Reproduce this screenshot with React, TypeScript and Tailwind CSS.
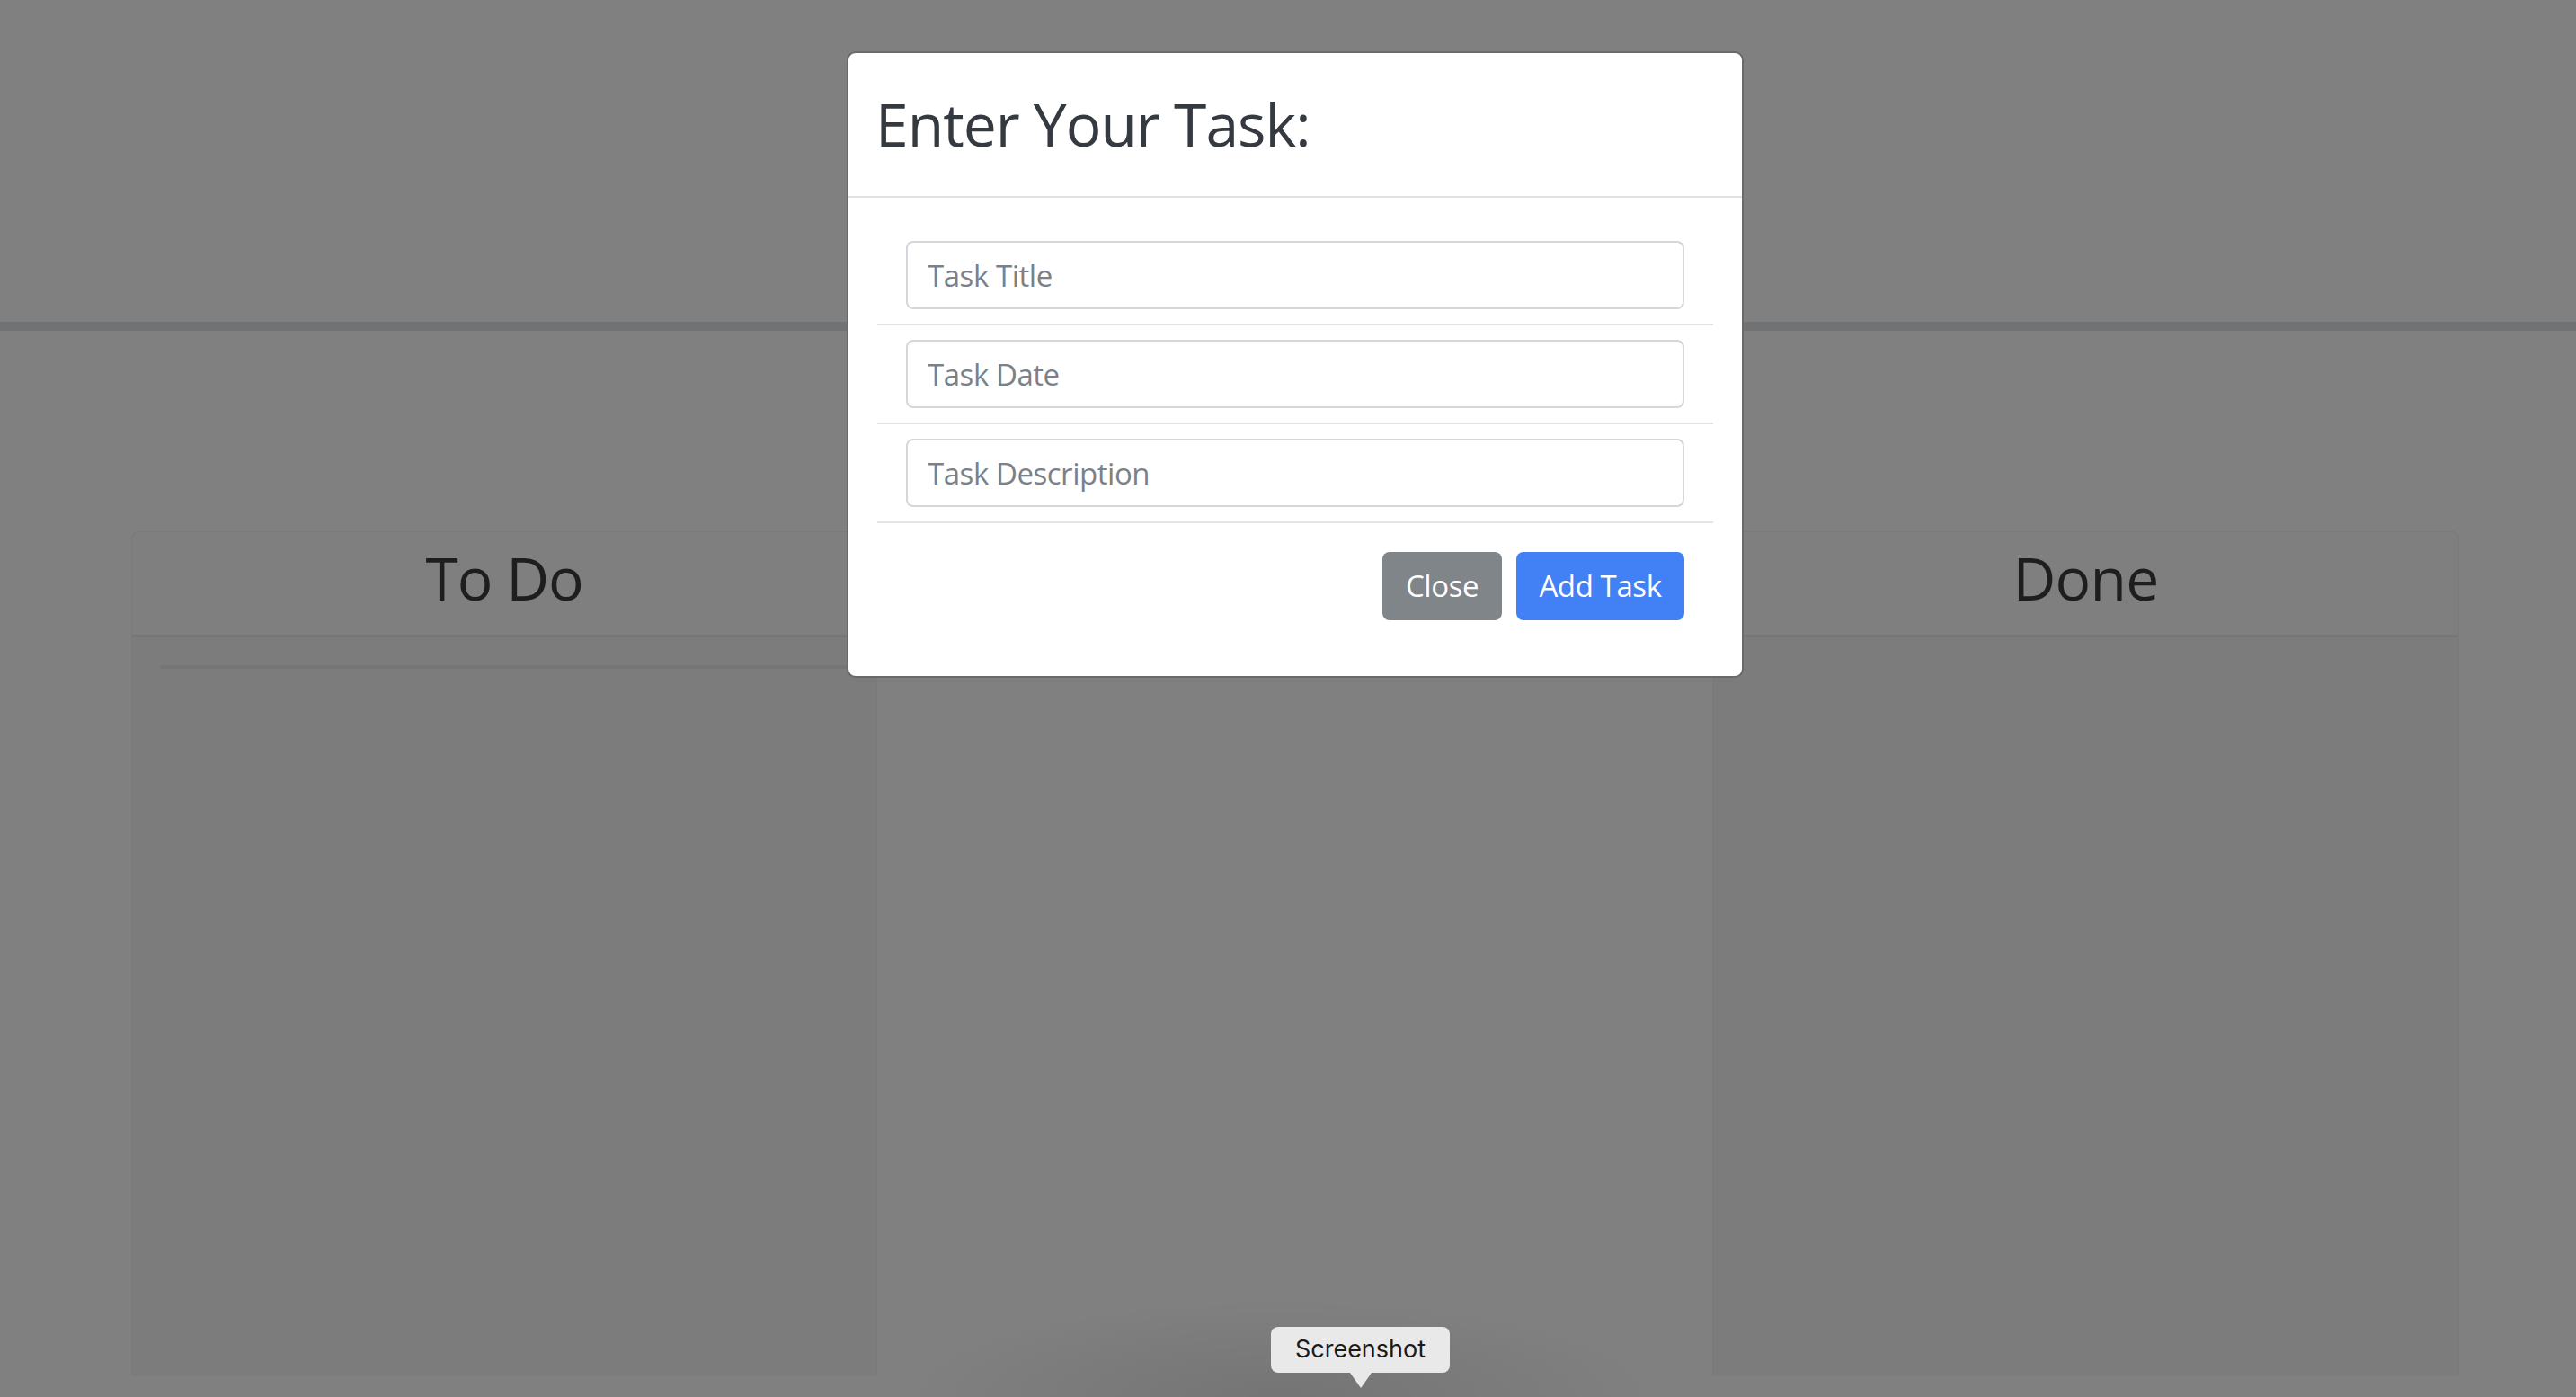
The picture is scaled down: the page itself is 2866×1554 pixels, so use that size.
import React from "react";

const fields = ["Task Title", "Task Date", "Task Description"];

export default function App() {
  return (
    <div className="relative h-[1554px] w-full overflow-hidden bg-[#808080] font-['Open_Sans',sans-serif]">
      {/* Page behind the backdrop */}
      <div className="h-[358px]" />
      <div className="h-[10px] bg-[#717274]" />

      <div className="mt-[223px] flex h-[939px] pl-[146px]">
        {/* To Do */}
        <section className="flex w-[830px] flex-col rounded-t-[8px] border border-[#7a7a7a] bg-[#7b7c7b]">
          <div className="h-[117px] rounded-t-[8px] border-b-[3px] border-[#767676] bg-[#7f7f7f] pt-[11px] text-center">
            <h3 className="text-[66px] leading-[79px] tracking-[-1.2px] text-[#1d1e20]">To Do</h3>
          </div>
          <div className="mx-[31px] mt-[31px] h-[4px] bg-[#767676]" />
        </section>

        {/* In Progress (hidden by modal) */}
        <section className="w-[929px] bg-[#7f807f]" />

        {/* Done */}
        <section className="flex w-[831px] flex-col rounded-t-[8px] border border-[#7a7a7a] bg-[#7b7c7b]">
          <div className="h-[117px] rounded-t-[8px] border-b-[3px] border-[#767676] bg-[#7f7f7f] pt-[11px] text-center">
            <h3 className="text-[66px] leading-[79px] tracking-[-0.8px] text-[#1d1e20]">Done</h3>
          </div>
        </section>
      </div>

      {/* Modal */}
      <div className="absolute left-[942px] top-[57px] w-[998px] rounded-[10px] border-2 border-[#6a6a6a] bg-white">
        <div className="border-b-2 border-[#dee2e6] px-[30px] pb-[41px] pt-[39px]">
          <h2 className="text-[66px] leading-[79px] tracking-[-1px] text-[#343a40]">Enter Your Task:</h2>
        </div>
        <div className="flex flex-col px-[32px] pb-[62px] pt-[48px]">
          {fields.map((f) => (
            <div key={f} className="flex flex-col">
              <div className="px-[32px]">
                <input
                  placeholder={f}
                  className="h-[76px] w-full rounded-[8px] border-2 border-[#d3d7db] px-[22px] text-[33px] tracking-[-0.45px] text-[#495057] outline-none placeholder:text-[#7b8189]"
                />
              </div>
              <div className="my-[16px] h-[2px] bg-[#e1e4e8]" />
            </div>
          ))}
          <div className="mt-[16px] flex justify-end gap-[16px] px-[32px]">
            <button className="h-[76px] w-[133px] rounded-[8px] bg-[#80858a] text-[33px] tracking-[-0.4px] text-white">
              Close
            </button>
            <button className="h-[76px] w-[187px] rounded-[8px] bg-[#4281f5] text-[33px] tracking-[-0.4px] text-white">
              Add Task
            </button>
          </div>
        </div>
      </div>

      {/* Screenshot toolbar shadow */}
      <div className="absolute bottom-0 left-[1000px] h-[110px] w-[850px] bg-[radial-gradient(ellipse_at_bottom,rgba(0,0,0,0.09),transparent_70%)]" />

      {/* Tooltip */}
      <div className="absolute left-[1414px] top-[1476px] flex flex-col items-center">
        <div className="flex h-[51px] w-[199px] items-center justify-center rounded-[8px] bg-[#e9e9e9] font-['Inter',sans-serif] text-[27px] text-[#1a1a1a]">
          Screenshot
        </div>
        <div className="h-0 w-0 border-l-[12px] border-r-[12px] border-t-[17px] border-l-transparent border-r-transparent border-t-[#e9e9e9]" />
      </div>
    </div>
  );
}
